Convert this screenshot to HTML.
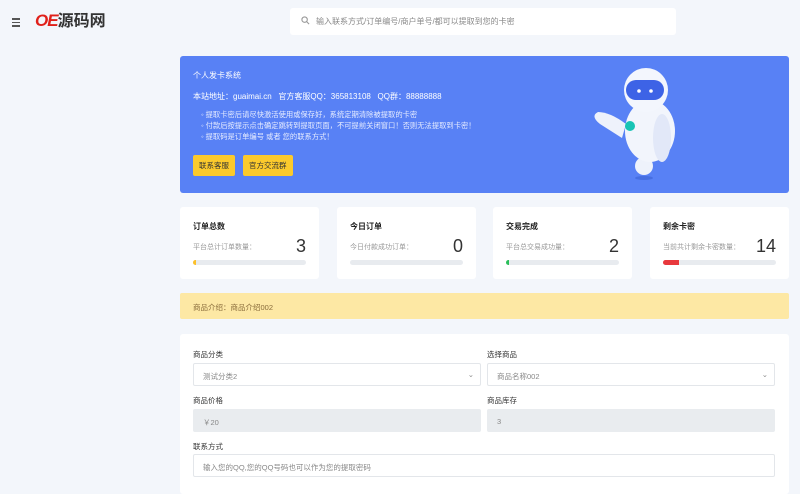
<!DOCTYPE html>
<html><head><meta charset="utf-8"><style>
*{margin:0;padding:0;box-sizing:border-box}
body{width:800px;height:484px;overflow:hidden;background:#f3f6fb;font-family:"Liberation Sans","Noto Sans CJK SC",sans-serif;position:relative;color:#333}
.abs{position:absolute}
.hb{left:12px;top:18px;width:8px}
.hb i{display:block;height:1.5px;background:#555;margin-bottom:2px}
.logo{left:35px;top:11px;font-size:16px;line-height:20px;font-weight:bold;white-space:nowrap;color:#333}
.logo b{color:#e0201a;font-style:italic;font-size:17px;letter-spacing:-1px}
.search{left:290px;top:8px;width:386px;height:27px;background:#fff;border-radius:3px;font-size:8px;color:#888;padding:8px 0 0 26px}
.banner{left:180px;top:56px;width:609px;height:137px;background:#5881f5;border-radius:3px;color:#fff}
.card{background:#fff;border-radius:3px;top:207px;height:72px;width:139px}
.card .t{position:absolute;left:13px;top:14px;font-size:8px;font-weight:bold;color:#222}
.card .s{position:absolute;left:13px;top:35px;font-size:7px;color:#999}
.card .n{position:absolute;right:13px;top:29px;font-size:18px;color:#333}
.card .bar{position:absolute;left:13px;right:13px;top:53px;height:5px;background:#e8ebef;border-radius:3px;overflow:hidden}
.card .bar i{display:block;height:5px}
.notice{left:180px;top:293px;width:609px;height:26px;background:#fde8a4;border-radius:2px;font-size:7.5px;color:#8a6d3b;padding:9px 0 0 13px}
.form{left:180px;top:334px;width:609px;height:160px;background:#fff;border-radius:3px}
.lb{position:absolute;font-size:7.5px;color:#333}
.in{position:absolute;height:23px;border:1px solid #e3e6ea;border-radius:2px;font-size:7.5px;color:#888;padding:7px 0 0 9px}
.gr{background:#e9ecef;border-color:#e9ecef}
.btn{display:inline-block;background:#fcca2c;color:#333;font-size:7.5px;padding:5px 6px;border-radius:2px;margin-right:8px}
</style></head><body>
<div class="abs hb"><i></i><i></i><i></i></div>
<div class="abs logo"><b>OE</b>源码网</div>
<div class="abs search"><svg class="abs" style="left:11px;top:8px" width="9" height="9" viewBox="0 0 10 10"><circle cx="4" cy="4" r="3" fill="none" stroke="#999" stroke-width="1.2"/><path d="M6.3 6.3L9 9" stroke="#999" stroke-width="1.2"/></svg>输入联系方式/订单编号/商户单号/都可以提取到您的卡密</div>
<div class="abs banner">
<div class="abs" style="left:13px;top:14px;font-size:8px">个人发卡系统</div>
<div class="abs" style="left:13px;top:35px;font-size:8px;white-space:nowrap">本站地址：guaimai.cn &nbsp;&nbsp;官方客服QQ：365813108 &nbsp;&nbsp;QQ群：88888888</div>
<div class="abs" style="left:21px;top:53px;font-size:7.3px;line-height:11px;color:#e6ecff;white-space:nowrap">◦ 提取卡密后请尽快激活使用或保存好，系统定期清除被提取的卡密<br>◦ 付款后按提示点击确定跳转到提取页面，不可提前关闭窗口！否则无法提取到卡密！<br>◦ 提取码是订单编号 或者 您的联系方式！</div>
<div class="abs" style="left:13px;top:99px;white-space:nowrap"><span class="btn">联系客服</span><span class="btn">官方交流群</span></div>
<svg class="abs" style="left:410px;top:0" width="120" height="137" viewBox="410 0 120 137">
<ellipse cx="464" cy="122" rx="9" ry="2" fill="#3f66d8" opacity=".7"/>
<circle cx="464" cy="110" r="9" fill="#eef2fb"/>
<path d="M418 56 Q410 60 420 68 L442 82 L446 68 Q430 56 418 56Z" fill="#eef2fb"/>
<ellipse cx="470" cy="75" rx="25" ry="31" fill="#f2f5fc"/>
<ellipse cx="482" cy="82" rx="9" ry="24" fill="#e2e8f8"/>
<circle cx="450" cy="70" r="5" fill="#18c4b5"/>
<circle cx="466" cy="34" r="22" fill="#f3f6fd"/>
<rect x="446" y="24" width="38" height="20" rx="10" fill="#3d63e6"/>
<circle cx="459" cy="35" r="1.8" fill="#fff"/><circle cx="471" cy="35" r="1.8" fill="#fff"/>
</svg>
</div>
<div class="abs card" style="left:180px"><div class="t">订单总数</div><div class="s">平台总计订单数量：</div><div class="n">3</div><div class="bar"><i style="width:3px;background:#fcc02a"></i></div></div>
<div class="abs card" style="left:337px"><div class="t">今日订单</div><div class="s">今日付款成功订单：</div><div class="n">0</div><div class="bar"></div></div>
<div class="abs card" style="left:493px"><div class="t">交易完成</div><div class="s">平台总交易成功量：</div><div class="n">2</div><div class="bar"><i style="width:3px;background:#2bbf5a"></i></div></div>
<div class="abs card" style="left:650px"><div class="t">剩余卡密</div><div class="s">当前共计剩余卡密数量：</div><div class="n">14</div><div class="bar"><i style="width:16px;background:#e8383d"></i></div></div>
<div class="abs notice">商品介绍：商品介绍002</div>
<div class="abs form">
<div class="lb" style="left:13px;top:15px">商品分类</div>
<div class="lb" style="left:307px;top:15px">选择商品</div>
<div class="in" style="left:13px;top:29px;width:288px">测试分类2<span style="position:absolute;right:6px;top:6px">⌄</span></div>
<div class="in" style="left:307px;top:29px;width:288px">商品名称002<span style="position:absolute;right:6px;top:6px">⌄</span></div>
<div class="lb" style="left:13px;top:61px">商品价格</div>
<div class="lb" style="left:307px;top:61px">商品库存</div>
<div class="in gr" style="left:13px;top:75px;width:288px">￥20</div>
<div class="in gr" style="left:307px;top:75px;width:288px">3</div>
<div class="lb" style="left:13px;top:107px">联系方式</div>
<div class="in" style="left:13px;top:120px;width:582px">输入您的QQ,您的QQ号码也可以作为您的提取密码</div>
</div>
</body></html>
